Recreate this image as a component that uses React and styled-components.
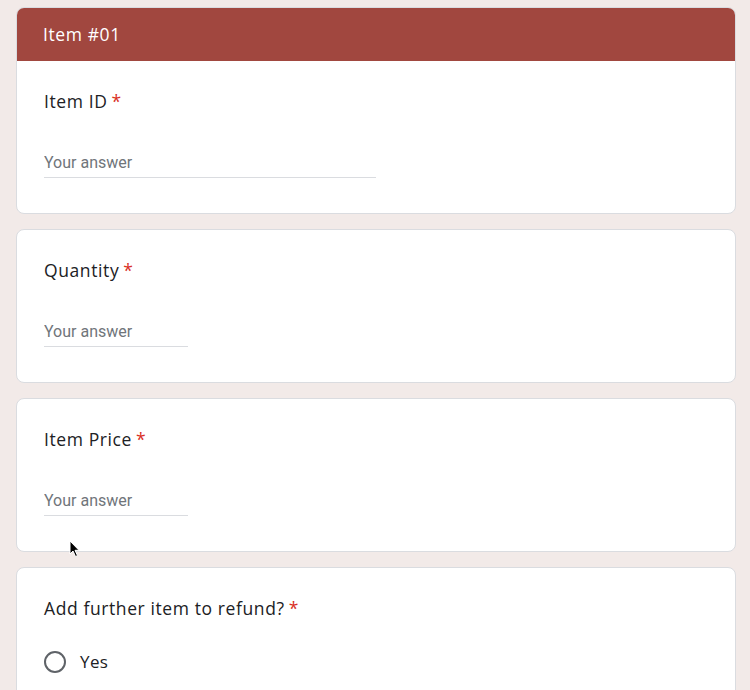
import styled, { createGlobalStyle } from "styled-components";

const GlobalStyle = createGlobalStyle`
  html, body {
    margin: 0;
    padding: 0;
    background: #f2eae8;
  }
  * {
    box-sizing: border-box;
  }
`;

const Page = styled.div`
  position: relative;
  width: 750px;
  height: 690px;
  overflow: hidden;
  padding: 7px 0 0 16px;
  display: flex;
  flex-direction: column;
  gap: 15px;
  font-family: "Open Sans", "Noto Sans", sans-serif;
`;

const Card = styled.div`
  width: 720px;
  background: #ffffff;
  border: 1px solid #dadce0;
  border-radius: 8px;
  overflow: hidden;
  flex-shrink: 0;
`;

const CardHeader = styled.div`
  height: 54px;
  background: #a1473f;
  color: #ffffff;
  display: flex;
  align-items: center;
  padding-left: 27px;
  font-size: 17.5px;
  letter-spacing: 0.6px;
  margin: -1px -1px 0;
`;

const CardBody = styled.div`
  padding: 28px 27px 35px;
`;

const Title = styled.div`
  font-size: 17.5px;
  line-height: 24px;
  height: 24px;
  color: #202124;
  letter-spacing: 0.6px;
`;

const Required = styled.span`
  color: #d93025;
  margin-left: 4px;
`;

const AnswerInput = styled.input`
  display: block;
  margin-top: 34px;
  width: ${(p) => p.$width}px;
  height: 31px;
  border: none;
  border-bottom: 1px solid #dadce0;
  padding: 0;
  font-family: Roboto, "Liberation Sans", sans-serif;
  font-size: 16px;
  color: #202124;
  background: transparent;
  &::placeholder {
    color: #70757a;
  }
  &:focus {
    outline: none;
  }
`;

const RadioRow = styled.label`
  display: flex;
  align-items: center;
  gap: 14px;
  margin-top: 30px;
  font-size: 17px;
  letter-spacing: 0.4px;
  color: #202124;
`;

const RadioCircle = styled.span`
  width: 22px;
  height: 22px;
  border: 2px solid #5f6368;
  border-radius: 50%;
`;

const Cursor = styled.svg`
  position: absolute;
  left: 69px;
  top: 540px;
`;

const questions = [
  { title: "Item ID", width: 332 },
  { title: "Quantity", width: 144 },
  { title: "Item Price", width: 144 },
];

const App = () => {
  return (
    <>
      <GlobalStyle />
      <Page>
        {questions.map((q, i) => (
          <Card key={q.title}>
            {i === 0 && <CardHeader>Item #01</CardHeader>}
            <CardBody>
              <Title>
                {q.title}
                <Required>*</Required>
              </Title>
              <AnswerInput $width={q.width} placeholder="Your answer" />
            </CardBody>
          </Card>
        ))}
        <Card>
          <CardBody>
            <Title>
              Add further item to refund?
              <Required>*</Required>
            </Title>
            <RadioRow>
              <RadioCircle />
              Yes
            </RadioRow>
          </CardBody>
        </Card>
        <Cursor width="12" height="18" viewBox="0 0 12 18">
          <path
            d="M1 1 L1 14 L4 11 L6.5 16.5 L8.5 15.6 L6 10.3 L10 10.3 Z"
            fill="#000"
            stroke="#fff"
            strokeWidth="1"
          />
        </Cursor>
      </Page>
    </>
  );
};

export default App;
